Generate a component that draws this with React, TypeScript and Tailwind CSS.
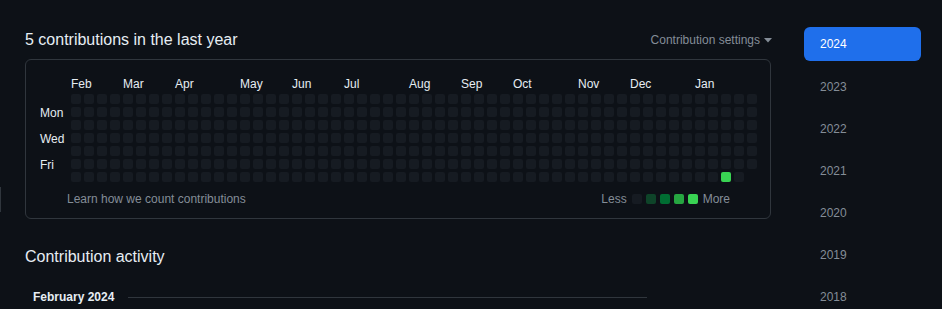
import React from "react";

const MONTHS: [string, number][] = [
  ["Feb", 0], ["Mar", 4], ["Apr", 8], ["May", 13], ["Jun", 17], ["Jul", 21],
  ["Aug", 26], ["Sep", 30], ["Oct", 34], ["Nov", 39], ["Dec", 43], ["Jan", 48],
];

const LEVELS = ["bg-[#161b22]", "bg-[#0e4429]", "bg-[#006d32]", "bg-[#26a641]", "bg-[#39d353]"];

function Cells() {
  const cells: React.ReactNode[] = [];
  for (let c = 0; c < 53; c++) {
    for (let r = 0; r < 7; r++) {
      if (c === 52 && r === 6) continue;
      const green = c === 50 && r === 6;
      cells.push(
        <div
          key={`${c}-${r}`}
          style={{ gridColumn: c + 1, gridRow: r + 1 }}
          className={`h-[10px] w-[10px] rounded-[2px] ${green ? "bg-[#39d353]" : "bg-[#161b22]"}`}
        />
      );
    }
  }
  return (
    <div className="grid grid-cols-[repeat(53,10px)] grid-rows-[repeat(7,10px)] gap-[3px]">{cells}</div>
  );
}

export default function App() {
  const years = ["2023", "2022", "2021", "2020", "2019", "2018"];
  return (
    <div
      className="relative h-[309px] w-[942px] overflow-hidden bg-[#0d1117] text-[#e6edf3]"
      style={{ fontFamily: '"Liberation Sans", "Noto Sans", sans-serif' }}
    >
      <div className="absolute left-0 top-[187px] h-[25px] w-px bg-[#30363d]" />
      <div className="flex pl-[25px] pt-[27px]">
        <div className="w-[746px]">
          <div className="flex items-center justify-between">
            <h2 className="text-[16px] leading-[26px]">5 contributions in the last year</h2>
            <div className="mr-[-1px] flex items-center gap-[4px] text-[12px] text-[#848d97]">
              Contribution settings
              <svg width="8" height="5" viewBox="0 0 8 5" className="mt-[1px]">
                <path d="M0 0h8L4 4.5z" fill="#848d97" />
              </svg>
            </div>
          </div>
          <div className="mt-[6px] rounded-[6px] border border-[#30363d] pb-[10px] pl-[14px] pt-[17px]">
            <div className="flex">
              <div className="w-[31px] shrink-0 pt-[16px] text-[12px] text-[#e6edf3]">
                <div className="h-[13px]" />
                <div className="flex h-[13px] items-center">Mon</div>
                <div className="h-[13px]" />
                <div className="flex h-[13px] items-center">Wed</div>
                <div className="h-[13px]" />
                <div className="flex h-[13px] items-center">Fri</div>
              </div>
              <div>
                <div className="mb-[2px] grid h-[15px] grid-cols-[repeat(53,10px)] gap-x-[3px] text-[12px] leading-[15px]">
                  {MONTHS.map(([m, c]) => (
                    <div key={m} style={{ gridColumn: `${c + 1} / span 4` }}>
                      {m}
                    </div>
                  ))}
                </div>
                <Cells />
              </div>
            </div>
            <div className="mt-[8px] flex items-center justify-between pl-[27px] pr-[40px] text-[12px] leading-[18px] text-[#848d97]">
              <span>Learn how we count contributions</span>
              <div className="flex items-center gap-[4px]">
                <span className="mr-[1px]">Less</span>
                {LEVELS.map((l) => (
                  <div key={l} className={`h-[10px] w-[10px] rounded-[2px] ${l}`} />
                ))}
                <span className="ml-[1px]">More</span>
              </div>
            </div>
          </div>
          <h2 className="mt-[26px] text-[16px] leading-[24px]">Contribution activity</h2>
          <div className="mt-[19px] flex items-center pl-[8px] pr-[124px]">
            <span className="text-[12px] font-bold leading-[18px]">February 2024</span>
            <div className="ml-[14px] h-px flex-1 bg-[#30363d]" />
          </div>
        </div>
        <div className="ml-[33px] w-[117px]">
          <div className="flex h-[34px] items-center rounded-[6px] bg-[#1f6feb] pl-[16px] text-[12px] text-white">2024</div>
          {years.map((y, i) => (
            <div
              key={y}
              className={`${i === 0 ? "mt-[9px]" : "mt-[8px]"} flex h-[34px] items-center pl-[16px] text-[12px] text-[#848d97]`}
            >
              {y}
            </div>
          ))}
        </div>
      </div>
    </div>
  );
}
